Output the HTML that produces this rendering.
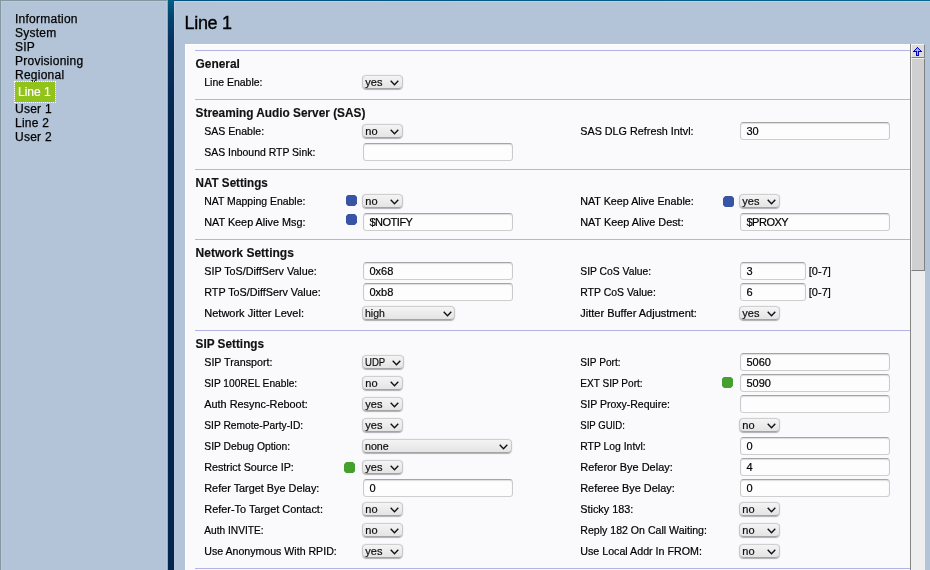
<!DOCTYPE html>
<html><head><meta charset="utf-8"><title>Line 1</title>
<style>
html,body{margin:0;padding:0}
body{width:930px;height:570px;overflow:hidden;position:relative;background:#b3c3d8;font-family:"Liberation Sans",sans-serif;color:#000}
#all{position:absolute;left:0;top:0;width:930px;height:570px;transform:translateZ(0)}
#topline{position:absolute;left:174px;top:0;width:756px;height:1px;background:linear-gradient(to right,#00527c,#06688c)}
#topline2{position:absolute;left:174px;top:1px;width:756px;height:1px;background:#c4cee2}
#rstrip{position:absolute;left:174px;top:1px;width:1px;height:569px;background:linear-gradient(to bottom,#c4cee2 0px,#c0cbe0 20px,#b9c7dc 60px,#b6c5da 570px)}
#lefttop{position:absolute;left:0;top:0;width:167px;height:1px;background:#8197a2}
#leftleft{position:absolute;left:0;top:0;width:1px;height:570px;background:#8197a2}
#leftin{position:absolute;left:1px;top:1px;width:165px;height:569px;box-sizing:border-box;border-left:1px solid #bac9de;border-top:1px solid #bac9de}
#leftedge{position:absolute;left:166px;top:1px;width:1px;height:569px;background:#bccae0}
#leftedge2{position:absolute;left:167px;top:0;width:1px;height:570px;background:#98a8b8}
#divider{position:absolute;left:168px;top:0;width:6px;height:570px;background:linear-gradient(to bottom,#005f86 0px,#00466f 16px,#07335f 40px,#052a55 90px,#03254d 150px,#03244c 570px)}
#nav{position:absolute;left:0;top:0;width:166px;font-size:12px;line-height:14px}
#nav a{position:absolute;left:15px;white-space:nowrap;color:#000;text-decoration:none;letter-spacing:0.25px;-webkit-text-stroke:0.25px #000}
#nav a.act{left:15px;top:82px;width:34px;height:14px;padding:3px 3px;letter-spacing:0;background:linear-gradient(#92c31a,#92c31a);color:#fff;-webkit-text-stroke:0.2px #fff;outline:1px dotted #fff}
h1{position:absolute;left:184.6px;top:12px;margin:0;font-size:18px;line-height:22px;font-weight:normal;white-space:nowrap;letter-spacing:-0.35px;-webkit-text-stroke:0.35px #000}
#panel{position:absolute;left:185px;top:44px;width:725px;height:526px;background:#fafafc;border-left:1px solid #fff;border-top:1px solid #fff;box-sizing:border-box;overflow:hidden}
.sep{position:absolute;left:9px;width:716px;height:1px;background:#b4b4e4}
.hd{position:absolute;transform-origin:0 0;left:9px;-webkit-text-stroke:0.15px #111;font-size:12px;font-weight:bold;line-height:14px;white-space:nowrap;color:#111}
.lb{position:absolute;transform-origin:0 0;font-size:11px;line-height:13px;white-space:nowrap;color:#000;-webkit-text-stroke:0.2px #000}
.sf{position:absolute;font-size:11px;line-height:13px;white-space:nowrap;color:#000;-webkit-text-stroke:0.2px #000}
.dot{position:absolute;width:11.2px;height:11.2px;clip-path:polygon(20% 0,80% 0,100% 20%,100% 80%,80% 100%,20% 100%,0 80%,0 20%)}
.dot.b{background:#3854a4}
.dot.g{background:#46a02d}
.sel{position:absolute;height:14.1px;box-sizing:border-box;border:1px solid #c6c6c6;border-top-color:#cfcfcf;border-bottom-color:#a4a4a4;border-radius:4.5px;background:linear-gradient(to bottom,#f4f4f4,#e4e4e4);box-shadow:0 0.6px 1px rgba(0,0,0,0.3);font-size:11px;line-height:11px;white-space:nowrap;color:#111}
.sel span{position:absolute;left:1.9px;top:1.2px;transform-origin:0 0;-webkit-text-stroke:0.2px #000}
.sel svg{position:absolute;right:2.5px;top:4px}
.inp{position:absolute;height:18.5px;box-sizing:border-box;border:1px solid #cacaca;border-top-color:#a4a4a4;border-bottom-color:#cecece;border-radius:3.5px;background:linear-gradient(#fdfdfe,#fdfdfe);box-shadow:inset 0 1px 1px rgba(0,0,0,0.13);font-size:11px;line-height:16.4px;white-space:nowrap;color:#000;-webkit-text-stroke:0.2px #000;padding-left:5.5px}
#sb{position:absolute;left:910px;top:44px;width:15px;height:526px;background:#eeeeee;border-left:1px solid #858585;box-sizing:border-box}
#sbbtn{position:absolute;left:0;top:0;width:14px;height:14px;box-sizing:border-box;background:#dcdcdc;border-top:1px solid #f4f4f4;border-left:1px solid #f4f4f4;border-right:1px solid #808080;border-bottom:1px solid #808080}
#sbthumb{position:absolute;left:0;top:14px;width:14px;height:213px;box-sizing:border-box;background:#d0d0d0;border-top:1px solid #f0f0f0;border-left:1px solid #f0f0f0;border-right:1px solid #808080;border-bottom:1px solid #808080}
</style></head>
<body>
<div id="all">
<div id="lefttop"></div><div id="leftleft"></div><div id="leftin"></div><div id="leftedge"></div><div id="leftedge2"></div><div id="rstrip"></div><div id="divider"></div><div id="topline"></div><div id="topline2"></div>
<div id="nav">
<a style="top:12px">Information</a>
<a style="top:26px">System</a>
<a style="top:40px">SIP</a>
<a style="top:54px">Provisioning</a>
<a style="top:68px">Regional</a>
<a class="act">Line 1</a>
<a style="top:102px">User 1</a>
<a style="top:116px">Line 2</a>
<a style="top:130px">User 2</a>
</div>
<h1>Line 1</h1>
<div id="panel">
<div class="sep" style="top:5px"></div>
<div class="hd" id="h0" style="top:12px;transform:translateX(0.55px) scaleX(0.9923);">General</div>
<div class="lb" id="l0_0_0" style="left:18px;top:31px;transform:translateX(0.25px) scaleX(0.9527);">Line Enable:</div><div class="sel" style="left:176.4px;top:30.2px;width:40.3px"><span>yes</span><svg width="9" height="6" viewBox="0 0 9 6"><path d="M0.7 0.8 L4.5 4.8 L8.3 0.8" fill="none" stroke="#111" stroke-width="1.35"/></svg></div>
<div class="sep" style="top:54px"></div>
<div class="hd" id="h1" style="top:61px;transform:translateX(0.55px) scaleX(0.9858);">Streaming Audio Server (SAS)</div>
<div class="lb" id="l1_0_0" style="left:18px;top:80px;transform:translateX(0.25px) scaleX(0.9591);">SAS Enable:</div><div class="sel" style="left:176.4px;top:79.2px;width:40.3px"><span>no</span><svg width="9" height="6" viewBox="0 0 9 6"><path d="M0.7 0.8 L4.5 4.8 L8.3 0.8" fill="none" stroke="#111" stroke-width="1.35"/></svg></div>
<div class="lb" id="l1_0_1" style="left:394px;top:80px;transform:translateX(0.25px) scaleX(0.9807);">SAS DLG Refresh Intvl:</div><div class="inp" style="left:554px;top:76.9px;width:150px;">30</div>
<div class="lb" id="l1_1_0" style="left:18px;top:101px;transform:translateX(0.25px) scaleX(0.9492);">SAS Inbound RTP Sink:</div><div class="inp" style="left:177px;top:97.9px;width:150px;"></div>
<div class="sep" style="top:124px"></div>
<div class="hd" id="h2" style="top:131px;transform:translateX(0.55px) scaleX(0.9707);">NAT Settings</div>
<div class="lb" id="l2_0_0" style="left:18px;top:150px;transform:translateX(0.25px) scaleX(0.9487);">NAT Mapping Enable:</div><div class="dot b" style="left:159.8px;top:149.8px"></div><div class="sel" style="left:176.4px;top:149.2px;width:40.3px"><span>no</span><svg width="9" height="6" viewBox="0 0 9 6"><path d="M0.7 0.8 L4.5 4.8 L8.3 0.8" fill="none" stroke="#111" stroke-width="1.35"/></svg></div>
<div class="lb" id="l2_0_1" style="left:394px;top:150px;transform:translateX(0.25px) scaleX(0.9755);">NAT Keep Alive Enable:</div><div class="dot b" style="left:537.0px;top:151.0px"></div><div class="sel" style="left:553.4px;top:149.2px;width:40.3px"><span>yes</span><svg width="9" height="6" viewBox="0 0 9 6"><path d="M0.7 0.8 L4.5 4.8 L8.3 0.8" fill="none" stroke="#111" stroke-width="1.35"/></svg></div>
<div class="lb" id="l2_1_0" style="left:18px;top:171px;transform:translateX(0.25px) scaleX(0.9831);">NAT Keep Alive Msg:</div><div class="dot b" style="left:159.8px;top:168.9px"></div><div class="inp" style="left:177px;top:167.9px;width:150px;letter-spacing:-0.5px;">$NOTIFY</div>
<div class="lb" id="l2_1_1" style="left:394px;top:171px;transform:translateX(0.25px) scaleX(0.9871);">NAT Keep Alive Dest:</div><div class="inp" style="left:554px;top:167.9px;width:150px;letter-spacing:-0.5px;">$PROXY</div>
<div class="sep" style="top:194px"></div>
<div class="hd" id="h3" style="top:201px;transform:translateX(0.55px) scaleX(1.0032);">Network Settings</div>
<div class="lb" id="l3_0_0" style="left:18px;top:220px;transform:translateX(0.25px) scaleX(0.9798);">SIP ToS/DiffServ Value:</div><div class="inp" style="left:177px;top:216.9px;width:150px;">0x68</div>
<div class="lb" id="l3_0_1" style="left:394px;top:220px;transform:translateX(0.25px) scaleX(0.9386);">SIP CoS Value:</div><div class="inp" style="left:554px;top:216.9px;width:66px;">3</div><div class="sf" style="left:622.8px;top:220px">[0-7]</div>
<div class="lb" id="l3_1_0" style="left:18px;top:241px;transform:translateX(0.25px) scaleX(0.9794);">RTP ToS/DiffServ Value:</div><div class="inp" style="left:177px;top:237.9px;width:150px;">0xb8</div>
<div class="lb" id="l3_1_1" style="left:394px;top:241px;transform:translateX(0.25px) scaleX(0.9503);">RTP CoS Value:</div><div class="inp" style="left:554px;top:237.9px;width:66px;">6</div><div class="sf" style="left:622.8px;top:241px">[0-7]</div>
<div class="lb" id="l3_2_0" style="left:18px;top:262px;transform:translateX(0.25px) scaleX(1.0007);">Network Jitter Level:</div><div class="sel" style="left:176.4px;top:261.2px;width:92.8px"><span style="transform:scaleX(0.95)">high</span><svg width="9" height="6" viewBox="0 0 9 6"><path d="M0.7 0.8 L4.5 4.8 L8.3 0.8" fill="none" stroke="#111" stroke-width="1.35"/></svg></div>
<div class="lb" id="l3_2_1" style="left:394px;top:262px;transform:translateX(0.25px) scaleX(1.0006);">Jitter Buffer Adjustment:</div><div class="sel" style="left:553.4px;top:261.2px;width:40.3px"><span>yes</span><svg width="9" height="6" viewBox="0 0 9 6"><path d="M0.7 0.8 L4.5 4.8 L8.3 0.8" fill="none" stroke="#111" stroke-width="1.35"/></svg></div>
<div class="sep" style="top:285px"></div>
<div class="hd" id="h4" style="top:292px;transform:translateX(0.55px) scaleX(0.9818);">SIP Settings</div>
<div class="lb" id="l4_0_0" style="left:18px;top:311px;transform:translateX(0.25px) scaleX(0.9739);">SIP Transport:</div><div class="sel" style="left:176.4px;top:310.2px;width:42.1px"><span style="transform:scaleX(0.87)">UDP</span><svg width="9" height="6" viewBox="0 0 9 6"><path d="M0.7 0.8 L4.5 4.8 L8.3 0.8" fill="none" stroke="#111" stroke-width="1.35"/></svg></div>
<div class="lb" id="l4_0_1" style="left:394px;top:311px;transform:translateX(0.25px) scaleX(0.9208);">SIP Port:</div><div class="inp" style="left:554px;top:307.9px;width:150px;">5060</div>
<div class="lb" id="l4_1_0" style="left:18px;top:332px;transform:translateX(0.25px) scaleX(0.9264);">SIP 100REL Enable:</div><div class="sel" style="left:176.4px;top:331.2px;width:40.3px"><span>no</span><svg width="9" height="6" viewBox="0 0 9 6"><path d="M0.7 0.8 L4.5 4.8 L8.3 0.8" fill="none" stroke="#111" stroke-width="1.35"/></svg></div>
<div class="lb" id="l4_1_1" style="left:394px;top:332px;transform:translateX(0.25px) scaleX(0.9168);">EXT SIP Port:</div><div class="dot g" style="left:535.8px;top:331.8px"></div><div class="inp" style="left:554px;top:328.9px;width:150px;">5090</div>
<div class="lb" id="l4_2_0" style="left:18px;top:353px;transform:translateX(0.25px) scaleX(0.9893);">Auth Resync-Reboot:</div><div class="sel" style="left:176.4px;top:352.2px;width:40.3px"><span>yes</span><svg width="9" height="6" viewBox="0 0 9 6"><path d="M0.7 0.8 L4.5 4.8 L8.3 0.8" fill="none" stroke="#111" stroke-width="1.35"/></svg></div>
<div class="lb" id="l4_2_1" style="left:394px;top:353px;transform:translateX(0.25px) scaleX(0.9547);">SIP Proxy-Require:</div><div class="inp" style="left:554px;top:349.9px;width:150px;"></div>
<div class="lb" id="l4_3_0" style="left:18px;top:374px;transform:translateX(0.25px) scaleX(0.9316);">SIP Remote-Party-ID:</div><div class="sel" style="left:176.4px;top:373.2px;width:40.3px"><span>yes</span><svg width="9" height="6" viewBox="0 0 9 6"><path d="M0.7 0.8 L4.5 4.8 L8.3 0.8" fill="none" stroke="#111" stroke-width="1.35"/></svg></div>
<div class="lb" id="l4_3_1" style="left:394px;top:374px;transform:translateX(0.25px) scaleX(0.8711);">SIP GUID:</div><div class="sel" style="left:553.4px;top:373.2px;width:40.3px"><span>no</span><svg width="9" height="6" viewBox="0 0 9 6"><path d="M0.7 0.8 L4.5 4.8 L8.3 0.8" fill="none" stroke="#111" stroke-width="1.35"/></svg></div>
<div class="lb" id="l4_4_0" style="left:18px;top:395px;transform:translateX(0.25px) scaleX(0.9395);">SIP Debug Option:</div><div class="sel" style="left:176.4px;top:394.2px;width:149.3px"><span style="transform:scaleX(0.97)">none</span><svg width="9" height="6" viewBox="0 0 9 6"><path d="M0.7 0.8 L4.5 4.8 L8.3 0.8" fill="none" stroke="#111" stroke-width="1.35"/></svg></div>
<div class="lb" id="l4_4_1" style="left:394px;top:395px;transform:translateX(0.25px) scaleX(0.9436);">RTP Log Intvl:</div><div class="inp" style="left:554px;top:391.9px;width:150px;">0</div>
<div class="lb" id="l4_5_0" style="left:18px;top:416px;transform:translateX(0.25px) scaleX(0.9763);">Restrict Source IP:</div><div class="dot g" style="left:158.0px;top:417.0px"></div><div class="sel" style="left:176.4px;top:415.2px;width:40.3px"><span>yes</span><svg width="9" height="6" viewBox="0 0 9 6"><path d="M0.7 0.8 L4.5 4.8 L8.3 0.8" fill="none" stroke="#111" stroke-width="1.35"/></svg></div>
<div class="lb" id="l4_5_1" style="left:394px;top:416px;transform:translateX(0.25px) scaleX(0.9954);">Referor Bye Delay:</div><div class="inp" style="left:554px;top:412.9px;width:150px;">4</div>
<div class="lb" id="l4_6_0" style="left:18px;top:437px;transform:translateX(0.25px) scaleX(0.9873);">Refer Target Bye Delay:</div><div class="inp" style="left:177px;top:433.9px;width:150px;">0</div>
<div class="lb" id="l4_6_1" style="left:394px;top:437px;transform:translateX(0.25px) scaleX(0.9906);">Referee Bye Delay:</div><div class="inp" style="left:554px;top:433.9px;width:150px;">0</div>
<div class="lb" id="l4_7_0" style="left:18px;top:458px;transform:translateX(0.25px) scaleX(0.9920);">Refer-To Target Contact:</div><div class="sel" style="left:176.4px;top:457.2px;width:40.3px"><span>no</span><svg width="9" height="6" viewBox="0 0 9 6"><path d="M0.7 0.8 L4.5 4.8 L8.3 0.8" fill="none" stroke="#111" stroke-width="1.35"/></svg></div>
<div class="lb" id="l4_7_1" style="left:394px;top:458px;transform:translateX(0.25px) scaleX(0.9871);">Sticky 183:</div><div class="sel" style="left:553.4px;top:457.2px;width:40.3px"><span>no</span><svg width="9" height="6" viewBox="0 0 9 6"><path d="M0.7 0.8 L4.5 4.8 L8.3 0.8" fill="none" stroke="#111" stroke-width="1.35"/></svg></div>
<div class="lb" id="l4_8_0" style="left:18px;top:479px;transform:translateX(0.25px) scaleX(0.9249);">Auth INVITE:</div><div class="sel" style="left:176.4px;top:478.2px;width:40.3px"><span>no</span><svg width="9" height="6" viewBox="0 0 9 6"><path d="M0.7 0.8 L4.5 4.8 L8.3 0.8" fill="none" stroke="#111" stroke-width="1.35"/></svg></div>
<div class="lb" id="l4_8_1" style="left:394px;top:479px;transform:translateX(0.25px) scaleX(0.9624);">Reply 182 On Call Waiting:</div><div class="sel" style="left:553.4px;top:478.2px;width:40.3px"><span>no</span><svg width="9" height="6" viewBox="0 0 9 6"><path d="M0.7 0.8 L4.5 4.8 L8.3 0.8" fill="none" stroke="#111" stroke-width="1.35"/></svg></div>
<div class="lb" id="l4_9_0" style="left:18px;top:500px;transform:translateX(0.25px) scaleX(0.9631);">Use Anonymous With RPID:</div><div class="sel" style="left:176.4px;top:499.2px;width:40.3px"><span>yes</span><svg width="9" height="6" viewBox="0 0 9 6"><path d="M0.7 0.8 L4.5 4.8 L8.3 0.8" fill="none" stroke="#111" stroke-width="1.35"/></svg></div>
<div class="lb" id="l4_9_1" style="left:394px;top:500px;transform:translateX(0.25px) scaleX(0.9705);">Use Local Addr In FROM:</div><div class="sel" style="left:553.4px;top:499.2px;width:40.3px"><span>no</span><svg width="9" height="6" viewBox="0 0 9 6"><path d="M0.7 0.8 L4.5 4.8 L8.3 0.8" fill="none" stroke="#111" stroke-width="1.35"/></svg></div>
<div class="sep" style="top:523px"></div>
</div>
<div id="sb"><div id="sbbtn"></div><div id="sbthumb"></div><svg width="14" height="14" viewBox="0 0 14 14" shape-rendering="crispEdges" style="position:absolute;left:0;top:0"><rect x="6" y="3" width="1" height="1" fill="#0000c4"/><rect x="5" y="4" width="1" height="1" fill="#0000c4"/><rect x="7" y="4" width="1" height="1" fill="#0000c4"/><rect x="6" y="4" width="1" height="1" fill="#a4a4ff"/><rect x="4" y="5" width="1" height="1" fill="#0000c4"/><rect x="8" y="5" width="1" height="1" fill="#0000c4"/><rect x="5" y="5" width="3" height="1" fill="#a4a4ff"/><rect x="3" y="6" width="1" height="1" fill="#0000c4"/><rect x="9" y="6" width="1" height="1" fill="#0000c4"/><rect x="4" y="6" width="5" height="1" fill="#a4a4ff"/><rect x="2" y="7" width="4" height="1" fill="#0000c4"/><rect x="7" y="7" width="4" height="1" fill="#0000c4"/><rect x="6" y="7" width="1" height="1" fill="#a4a4ff"/><rect x="5" y="8" width="1" height="3" fill="#0000c4"/><rect x="7" y="8" width="1" height="3" fill="#0000c4"/><rect x="6" y="8" width="1" height="3" fill="#a4a4ff"/><rect x="5" y="11" width="3" height="1" fill="#0000c4"/></svg></div>
</div>
</body></html>
